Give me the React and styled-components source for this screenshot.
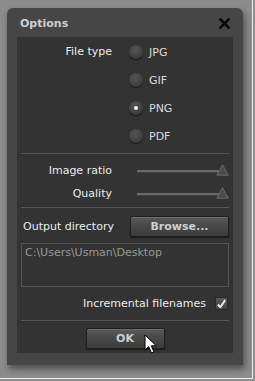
import React, { useState } from 'react';
import styled, { createGlobalStyle } from 'styled-components';

const GlobalStyle = createGlobalStyle`
  html, body {
    margin: 0;
    padding: 0;
    background: #8e8e8e;
  }
  * {
    box-sizing: border-box;
  }
`;

const fileTypes = ['JPG', 'GIF', 'PNG', 'PDF'];

const App = () => {
  const [fileType, setFileType] = useState('PNG');
  const [incremental, setIncremental] = useState(true);

  return (
    <>
      <GlobalStyle />
      <Page>
        <Frame>
          <Dialog>
            <TitleBar>
              <Title>Options</Title>
              <CloseButton aria-label="Close">
                <svg width="11" height="11" viewBox="0 0 11 11">
                  <path d="M1.5 1.5 L9.5 9.5 M9.5 1.5 L1.5 9.5" stroke="#0a0a0a" strokeWidth="2.6" strokeLinecap="square" />
                </svg>
              </CloseButton>
            </TitleBar>

            <Panel>
              <FileTypeGrid>
                <FieldLabel>File type</FieldLabel>
                <RadioList>
                  {fileTypes.map((t) => (
                    <RadioRow key={t} onClick={() => setFileType(t)}>
                      <RadioDot $checked={fileType === t} />
                      <RadioText>{t}</RadioText>
                    </RadioRow>
                  ))}
                </RadioList>
              </FileTypeGrid>

              <Divider $gap={10} />

              <SliderBlock>
                <SliderRow>
                  <FieldLabel>Image ratio</FieldLabel>
                  <Slider />
                </SliderRow>
                <SliderRow>
                  <FieldLabel>Quality</FieldLabel>
                  <Slider />
                </SliderRow>
              </SliderBlock>

              <Divider $gap={7} />

              <OutputRow>
                <OutputLabel>Output directory</OutputLabel>
                <BrowseButton>Browse...</BrowseButton>
              </OutputRow>

              <PathBox>C:\Users\Usman\Desktop</PathBox>

              <CheckRow onClick={() => setIncremental(!incremental)}>
                <FieldLabel>Incremental filenames</FieldLabel>
                <CheckBox>
                  {incremental && (
                    <svg width="12" height="12" viewBox="0 0 12 12">
                      <path d="M2 6.5 L4.8 9.5 L10 1.8" fill="none" stroke="#e8e8e8" strokeWidth="2.2" strokeLinejoin="round" />
                    </svg>
                  )}
                </CheckBox>
              </CheckRow>

              <Divider $gap={10} />

              <Footer>
                <OkButton>
                  OK
                  <Cursor width="16" height="21" viewBox="0 0 16 21">
                    <path d="M1 1 L1 16 L4.7 12.6 L7.5 19 L10 18 L7.3 11.8 L12.3 11.8 Z" fill="#fff" stroke="#000" strokeWidth="1" strokeLinejoin="round" />
                  </Cursor>
                </OkButton>
              </Footer>
            </Panel>
          </Dialog>
        </Frame>
      </Page>
    </>
  );
};

const Slider = () => (
  <Track>
    <svg width="13" height="12" viewBox="0 0 13 12">
      <path d="M6.5 0.8 L12.2 11.2 L0.8 11.2 Z" fill="#4a4a4a" stroke="#6a6a6a" strokeWidth="1" />
    </svg>
  </Track>
);

const Page = styled.div`
  width: 255px;
  height: 381px;
  padding: 0 2px 2px 0;
  background: #8e8e8e;
  overflow: hidden;
`;

const Frame = styled.div`
  height: 100%;
  padding: 8px 10px 0 7px;
  border-right: 1px solid #f2f2f2;
  border-bottom: 1px solid #f2f2f2;
  background: #8c8c8c;
`;

const Dialog = styled.div`
  width: 236px;
  height: 357px;
  background: #464646;
  border-radius: 6px 6px 0 0;
  padding: 0 10px 12px 10px;
  box-shadow: 2px 4px 7px rgba(0, 0, 0, 0.45);
  display: flex;
  flex-direction: column;
  font-family: "DejaVu Sans", Verdana, sans-serif;
`;

const TitleBar = styled.div`
  height: 29px;
  display: flex;
  align-items: center;
  justify-content: space-between;
  padding: 2px 3px 0 3px;
`;

const Title = styled.div`
  font-size: 11px;
  font-weight: bold;
  color: #cfcfcf;
`;

const CloseButton = styled.div`
  display: flex;
  align-items: center;
  cursor: pointer;
`;

const Panel = styled.div`
  flex: 1;
  background: #333333;
  padding: 8px 4px 0 4px;
  display: flex;
  flex-direction: column;
`;

const FieldLabel = styled.div`
  font-size: 11px;
  color: #ececec;
  text-align: right;
  white-space: nowrap;
`;

const FileTypeGrid = styled.div`
  display: grid;
  grid-template-columns: 91px 1fr;
  column-gap: 21px;
  align-items: start;
`;

const RadioList = styled.div`
  display: flex;
  flex-direction: column;
  gap: 14px;
`;

const RadioRow = styled.div`
  display: flex;
  align-items: center;
  gap: 6px;
  height: 14px;
  cursor: pointer;
`;

const RadioDot = styled.span`
  position: relative;
  width: 14px;
  height: 14px;
  margin-left: -4px;
  border-radius: 50%;
  background: radial-gradient(circle at 45% 35%, #555 0%, #444 50%, #2a2a2a 100%);
  box-shadow: 0 1px 1px rgba(0, 0, 0, 0.6);

  &::after {
    content: '';
    display: ${(p) => (p.$checked ? 'block' : 'none')};
    position: absolute;
    left: 5px;
    top: 5px;
    width: 4px;
    height: 4px;
    border-radius: 50%;
    background: #f0f0f0;
  }
`;

const RadioText = styled.span`
  font-size: 11px;
  color: #dcdcdc;
`;

const Divider = styled.div`
  height: 1px;
  background: #585858;
  margin-top: ${(p) => p.$gap}px;
`;

const SliderBlock = styled.div`
  display: flex;
  flex-direction: column;
  gap: 9px;
  padding-top: 9px;
`;

const SliderRow = styled.div`
  display: grid;
  grid-template-columns: 91px 1fr;
  column-gap: 25px;
  align-items: center;
  height: 14px;
`;

const Track = styled.div`
  position: relative;
  height: 12px;
  display: flex;
  justify-content: flex-end;
  align-items: flex-end;

  &::before {
    content: '';
    position: absolute;
    left: 0;
    right: 6px;
    top: 6px;
    height: 2px;
    background: #6a6a6a;
    border-bottom: 1px solid #3e3e3e;
  }

  svg {
    position: relative;
  }
`;

const OutputRow = styled.div`
  display: flex;
  align-items: center;
  justify-content: space-between;
  margin-top: 8px;
`;

const OutputLabel = styled(FieldLabel)`
  padding-left: 2px;
`;

const buttonStyle = `
  border: 1px solid #1e1e1e;
  border-radius: 2px;
  background: linear-gradient(to bottom, #5a5a5a 0%, #474747 50%, #3c3c3c 100%);
  box-shadow: inset 0 1px 0 rgba(255, 255, 255, 0.12), 0 1px 1px rgba(0, 0, 0, 0.5);
  color: #cfcfcf;
  font-family: "DejaVu Sans", Verdana, sans-serif;
  font-size: 11px;
  font-weight: bold;
  display: flex;
  align-items: center;
  justify-content: center;
  cursor: pointer;
`;

const BrowseButton = styled.div`
  ${buttonStyle}
  width: 99px;
  height: 21px;
`;

const PathBox = styled.div`
  margin-top: 6px;
  height: 44px;
  border: 1px solid #555;
  padding: 2px 3px;
  font-size: 11px;
  color: #999999;
`;

const CheckRow = styled.div`
  display: flex;
  align-items: center;
  justify-content: flex-end;
  gap: 9px;
  margin-top: 10px;
  padding-right: 1px;
  cursor: pointer;
`;

const CheckBox = styled.div`
  width: 13px;
  height: 13px;
  background: linear-gradient(to bottom, #5a5a5a, #444);
  border: 1px solid #2a2a2a;
  display: flex;
  align-items: center;
  justify-content: center;
`;

const Footer = styled.div`
  display: flex;
  justify-content: center;
  padding-top: 7px;
`;

const OkButton = styled.div`
  ${buttonStyle}
  position: relative;
  width: 79px;
  height: 21px;
`;

const Cursor = styled.svg`
  position: absolute;
  left: 57px;
  top: 5px;
`;

export default App;
